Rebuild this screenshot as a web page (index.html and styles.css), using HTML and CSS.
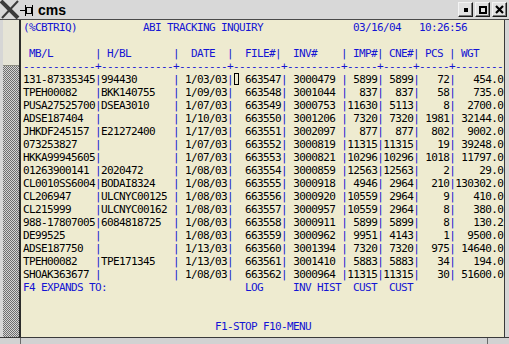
FILE: index.html
```html
<!DOCTYPE html>
<html lang="en">
<head>
    <meta charset="UTF-8">
    <title>cms</title>
    <link rel="stylesheet" href="styles.css">
</head>
<body>
    <div class="window">
        <!-- barra de titulo -->
        <div class="titlebar">
            <svg class="xlogo" width="20" height="19" viewBox="0 0 20 19">
                <path d="M1 1 L18 18" stroke="#3a3a3a" stroke-width="4"/>
                <path d="M18 1 L2 18" stroke="#3a3a3a" stroke-width="2"/>
            </svg>
            <svg class="pin" width="14" height="19" viewBox="0 0 14 19">
                <path d="M0 10.5 H5" stroke="#000" stroke-width="1"/>
                <path d="M5.5 5 V16" stroke="#000" stroke-width="1"/>
                <rect x="6.5" y="7.5" width="5" height="6" fill="none" stroke="#000" stroke-width="1"/>
                <path d="M12.5 5 V16" stroke="#000" stroke-width="1"/>
            </svg>
            <span class="title">cms</span>
            <div class="buttons">
                <div class="btn"><span class="ico-min"></span></div>
                <div class="btn"><span class="ico-max"></span></div>
                <div class="btn">
                    <svg width="9" height="9" viewBox="0 0 9 9">
                        <path d="M1 1 L8 8 M8 1 L1 8" stroke="#000" stroke-width="2.2"/>
                    </svg>
                </div>
            </div>
        </div>

        <div class="frame">
            <div class="edge-left"></div>
            <div class="scrollbar">
                <div class="thumb"></div>
            </div>
            <div class="screen" id="screen">
                <div class="line blue">(%CBTRIQ)           ABI TRACKING INQUIRY               03/16/04   10:26:56</div>
                <div class="line"> </div>
                <div class="line blue"> MB/L       | H/BL       |  DATE  |  FILE#|  INV#    | IMP#| CNE#| PCS | WGT</div>
                <div class="line blue">------------+------------+--------+--------+---------+-----+-----+-----+--------</div>
                <div id="rows"></div>
                <div class="line blue">F4 EXPANDS TO:                       LOG     INV HIST  CUST  CUST</div>
                <div class="line"> </div>
                <div class="line"> </div>
                <div class="line blue">                                F1-STOP F10-MENU</div>
            </div>
            <div class="edge-right"></div>
        </div>
        <div class="bottom">
            <div class="seg seg-left"></div>
            <div class="seg seg-mid"></div>
            <div class="seg seg-right"></div>
        </div>
    </div>

    <script>
        // MB/L, H/BL, fecha, file, inv, imp, cne, pcs, wgt
        const rows = [
            ['131-87335345', '994430', '1/03/03', '663547', '3000479', '5899', '5899', '72', '454.0'],
            ['TPEH00082', 'BKK140755', '1/09/03', '663548', '3001044', '837', '837', '58', '735.0'],
            ['PUSA27525700', 'DSEA3010', '1/07/03', '663549', '3000753', '11630', '5113', '8', '2700.0'],
            ['ADSE187404', '', '1/10/03', '663550', '3001206', '7320', '7320', '1981', '32144.0'],
            ['JHKDF245157', 'E21272400', '1/17/03', '663551', '3002097', '877', '877', '802', '9002.0'],
            ['073253827', '', '1/07/03', '663552', '3000819', '11315', '11315', '19', '39248.0'],
            ['HKKA99945605', '', '1/07/03', '663553', '3000821', '10296', '10296', '1018', '11797.0'],
            ['01263900141', '2020472', '1/08/03', '663554', '3000859', '12563', '12563', '2', '29.0'],
            ['CL0010SS6004', 'BODAI8324', '1/08/03', '663555', '3000918', '4946', '2964', '210', '130302.0'],
            ['CL206947', 'ULCNYC00125', '1/08/03', '663556', '3000920', '10559', '2964', '9', '410.0'],
            ['CL215999', 'ULCNYC00162', '1/08/03', '663557', '3000957', '10559', '2964', '8', '380.0'],
            ['988-17807005', '6084818725', '1/08/03', '663558', '3000911', '5899', '5899', '8', '130.2'],
            ['DE99525', '', '1/08/03', '663559', '3000962', '9951', '4143', '1', '9500.0'],
            ['ADSE187750', '', '1/13/03', '663560', '3001394', '7320', '7320', '975', '14640.0'],
            ['TPEH00082', 'TPE171345', '1/13/03', '663561', '3001410', '5883', '5883', '34', '194.0'],
            ['SHOAK363677', '', '1/08/03', '663562', '3000964', '11315', '11315', '30', '51600.0']
        ];

        const sep = '<span class="blue">|</span>';
        let html = '';
        rows.forEach((r, i) => {
            const cursor = i === 0 ? '<span class="cursor"></span>' : ' ';
            html += '<div class="line">' +
                r[0].padEnd(12) + sep +
                r[1].padEnd(12) + sep +
                ' ' + r[2] + sep +
                cursor + ' ' + r[3] + sep +
                ' ' + r[4] + ' ' + sep +
                r[5].padStart(5) + sep +
                r[6].padStart(5) + sep +
                r[7].padStart(5) + sep +
                r[8].padStart(8) +
                '</div>';
        });
        document.getElementById('rows').innerHTML = html;
    </script>
</body>
</html>
```

FILE: styles.css
```css
body {
    margin: 0;
    background-color: #d2d2d2;
}
.window {
    width: 509px;
    height: 344px;
    overflow: hidden;
    background-color: #d2d2d2;
}

/* barra de titulo */
.titlebar {
    height: 19px;
    display: flex;
    align-items: center;
    background-color: #d8d8d8;
    border-bottom: 1px solid #4a4a4a;
}
.xlogo, .pin {
    display: block;
    flex: none;
}
.title {
    margin-left: 4px;
    font-family: "Liberation Sans", Arial, sans-serif;
    font-weight: bold;
    font-size: 14px;
    color: #000;
}
.buttons {
    margin-left: auto;
    margin-right: 2px;
    display: flex;
    gap: 2px;
}
.btn {
    width: 15px;
    height: 15px;
    box-sizing: border-box;
    border: 1px solid;
    border-color: #f4f4f4 #1a1a1a #1a1a1a #f4f4f4;
    box-shadow: inset -1px -1px 0 #7a7a7a;
    background-color: #e2e2e2;
    display: flex;
    align-items: center;
    justify-content: center;
}
.ico-min {
    width: 4px;
    height: 4px;
    background-color: #000;
}
.ico-max {
    width: 8px;
    height: 8px;
    box-sizing: border-box;
    border: 2px solid #000;
}

/* marco y terminal */
.frame {
    display: flex;
    height: 317px;
}
.edge-left {
    width: 3px;
    background-color: #d6d6d6;
}
.scrollbar {
    width: 16px;
    border-right: 2px solid #2c2c2c;
    background: repeating-conic-gradient(#6e6e6e 0 25%, #d4d4d4 0 50%) 0 0 / 2px 2px;
}
.thumb {
    height: 45px;
    background-color: #e6e4d6;
    border-bottom: 1px solid #8a8a80;
}
.screen {
    flex: 1;
    padding: 1px 0 0 2px;
    background-color: #eeebd0;
    font-family: "DejaVu Sans Mono", "Liberation Mono", monospace;
    font-size: 11px;
    letter-spacing: -0.622px;
    line-height: 13px;
    color: #000;
}
.line {
    height: 13px;
    white-space: pre;
}
.blue {
    color: #1414d4;
}
.cursor {
    display: inline-block;
    width: 5px;
    height: 12px;
    margin-left: 1px;
    box-sizing: border-box;
    border: 1px solid #000;
    vertical-align: top;
}
.edge-right {
    width: 4px;
    border-left: 1px solid #3a3a3a;
    background-color: #d6d6d6;
}
.bottom {
    height: 6px;
    display: flex;
    border-top: 1px solid #3a3a3a;
    background-color: #d2d2d2;
}
.seg {
    border-right: 1px solid #6a6a6a;
}
.seg-left {
    width: 20px;
}
.seg-mid {
    flex: 1;
}
.seg-right {
    width: 21px;
    border-right: none;
}
```
